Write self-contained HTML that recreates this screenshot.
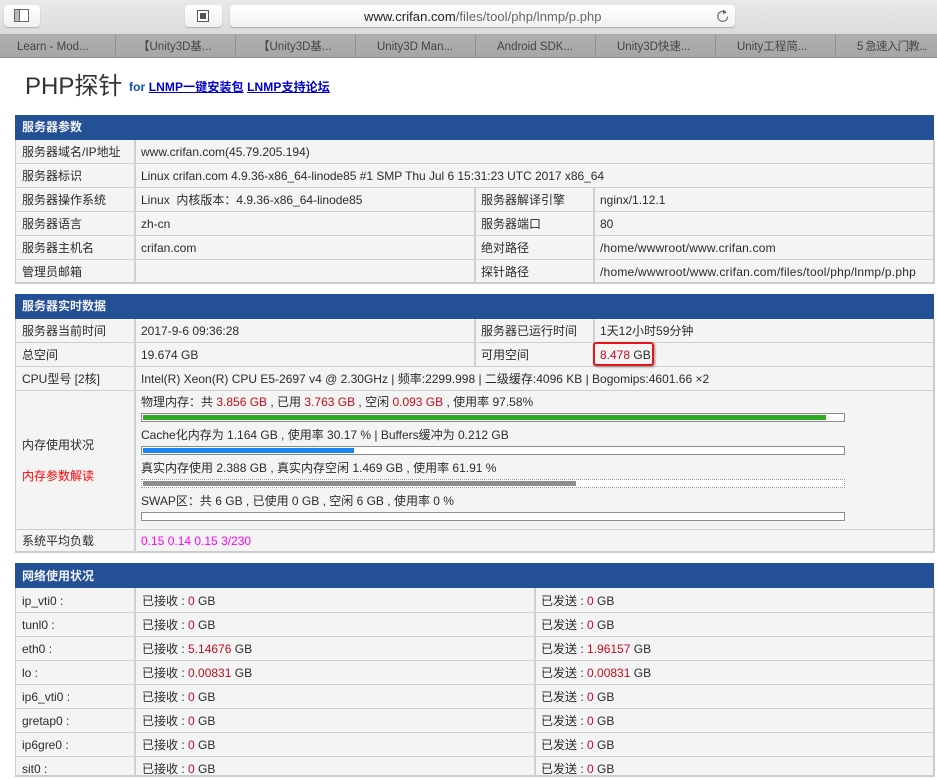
<!DOCTYPE html>
<html><head><meta charset="utf-8"><style>
html,body{margin:0;padding:0;background:#fff}
body{width:937px;height:775px;overflow:hidden;position:relative;font-family:"Liberation Sans","Noto Sans CJK SC",sans-serif;font-size:12px;color:#2b2b2b}
div{position:absolute}
.t{line-height:24px;white-space:nowrap;height:24px}
.n .t{margin-top:1px}
.r{color:#c00d1c}
.h{left:15px;width:919px;height:25px;background:#245196}
.ht{left:22px;line-height:25px;color:#f2f2f6;font-weight:bold;font-size:12px;white-space:nowrap}
.tb{left:15px;width:917px;background:#f4f4f4;border:1px solid #ccc;border-top:0;border-width:0 2px 2px 1px}
.hl{left:15px;width:919px;height:1px;background:#cdcdcd}
.vl{width:2px;background:#d0d0d0}
.tab{top:36px;height:22px;line-height:22px;text-align:center;font-size:11.5px;color:#444;white-space:nowrap}
.tl{top:35px;width:1px;height:22px;background:#8f8f8f}
.btn{background:linear-gradient(#fff,#f1f1f1);border-radius:4px;box-shadow:0 1px 1px #aaa;top:5px;height:22px}
.bar{left:141px;width:702px;height:7px;background:#fff;border:1px solid #8c8c8c}
.fill{left:1px;top:1px;height:5px}
</style></head><body>
<div style="left:0;top:0;width:937px;height:34px;background:linear-gradient(#e9e8ea,#dcdbdd);border-bottom:1px solid #a8a8a8"></div>
<div style="left:0;top:35px;width:937px;height:22px;background:linear-gradient(#b0afb0,#a7a6a7);border-bottom:1px solid #8f8f8f"></div>
<div class="btn" style="left:4px;width:36px"></div>
<svg style="position:absolute;left:14px;top:9px" width="16" height="14"><rect x=".5" y=".5" width="14" height="12" fill="#fff" stroke="#666"/><rect x="1" y="1" width="4.5" height="11" fill="#bbb"/><path d="M5.5 1v11" stroke="#666"/></svg>
<div class="btn" style="left:185px;width:37px"></div>
<svg style="position:absolute;left:197px;top:10px" width="14" height="14"><rect x=".5" y=".5" width="11" height="11" fill="#fff" stroke="#555"/><rect x="3" y="3" width="6" height="6" fill="#555"/></svg>
<div class="btn" style="left:230px;width:505px"></div>
<div class="t" style="left:364px;top:5px;font-size:13px;color:#222;letter-spacing:.05px">www.crifan.com<span style="color:#666">/files/tool/php/lnmp/p.php</span></div>
<svg style="position:absolute;left:715px;top:8px" width="15" height="16"><path d="M10.5 4.2A5 5 0 1 0 12.7 8.5" fill="none" stroke="#666" stroke-width="1.1"/><path d="M8 1.5l3.8 2.7L8 6.2z" fill="#666"/></svg>
<div class="tl" style="left:115px"></div><div class="tl" style="left:235px"></div><div class="tl" style="left:355px"></div><div class="tl" style="left:475px"></div><div class="tl" style="left:595px"></div><div class="tl" style="left:715px"></div><div class="tl" style="left:835px"></div>
<div class="tab" style="left:17px">Learn - Mod...</div>
<div class="tab" style="left:138px">【Unity3D基...</div>
<div class="tab" style="left:258px">【Unity3D基...</div>
<div class="tab" style="left:377px">Unity3D Man...</div>
<div class="tab" style="left:497px">Android SDK...</div>
<div class="tab" style="left:617px">Unity3D快速...</div>
<div class="tab" style="left:737px">Unity工程简...</div>
<div class="tab" style="left:857px;letter-spacing:-.7px">5 急速入门教...</div>

<div style="left:25px;top:68px;font-size:24px;line-height:38px;color:#333;white-space:nowrap">PHP探针</div>
<div style="left:129px;top:77px;font-size:12px;line-height:20px;font-weight:bold;color:#0b4fc0;white-space:nowrap;letter-spacing:.1px">for <span style="color:#00c;text-decoration:underline">LNMP一键安装包</span> <span style="color:#00c;text-decoration:underline">LNMP支持论坛</span></div>

<!-- table 1 -->
<div class="tb" style="top:140px;height:142px"></div>
<div class="h" style="top:115px"></div><div class="ht" style="top:115px">服务器参数</div>
<div class="hl" style="top:163px"></div><div class="hl" style="top:187px"></div><div class="hl" style="top:211px"></div><div class="hl" style="top:235px"></div><div class="hl" style="top:259px"></div>
<div class="vl" style="left:134px;top:140px;height:143px"></div>
<div class="vl" style="left:474px;top:188px;height:95px"></div>
<div class="vl" style="left:593px;top:188px;height:95px"></div>
<div class="t" style="left:22px;top:140px">服务器域名/IP地址</div><div class="t" style="left:141px;top:140px">www.crifan.com(45.79.205.194)</div>
<div class="t" style="left:22px;top:164px">服务器标识</div><div class="t" style="left:141px;top:164px;letter-spacing:-.035px">Linux crifan.com 4.9.36-x86_64-linode85 #1 SMP Thu Jul 6 15:31:23 UTC 2017 x86_64</div>
<div class="t" style="left:22px;top:188px">服务器操作系统</div><div class="t" style="left:141px;top:188px">Linux &nbsp;内核版本：4.9.36-x86_64-linode85</div>
<div class="t" style="left:481px;top:188px">服务器解译引擎</div><div class="t" style="left:600px;top:188px">nginx/1.12.1</div>
<div class="t" style="left:22px;top:212px">服务器语言</div><div class="t" style="left:141px;top:212px">zh-cn</div>
<div class="t" style="left:481px;top:212px">服务器端口</div><div class="t" style="left:600px;top:212px">80</div>
<div class="t" style="left:22px;top:236px">服务器主机名</div><div class="t" style="left:141px;top:236px">crifan.com</div>
<div class="t" style="left:481px;top:236px">绝对路径</div><div class="t" style="left:600px;top:236px;letter-spacing:.18px">/home/wwwroot/www.crifan.com</div>
<div class="t" style="left:22px;top:260px">管理员邮箱</div>
<div class="t" style="left:481px;top:260px">探针路径</div><div class="t" style="left:600px;top:260px;letter-spacing:.22px">/home/wwwroot/www.crifan.com/files/tool/php/lnmp/p.php</div>

<!-- table 2 -->
<div class="tb" style="top:319px;height:232px"></div>
<div class="h" style="top:294px"></div><div class="ht" style="top:294px">服务器实时数据</div>
<div class="hl" style="top:342px"></div><div class="hl" style="top:366px"></div><div class="hl" style="top:390px"></div><div class="hl" style="top:529px"></div>
<div class="vl" style="left:134px;top:319px;height:233px"></div>
<div class="vl" style="left:474px;top:319px;height:48px"></div>
<div class="vl" style="left:593px;top:319px;height:48px"></div>
<div class="t" style="left:22px;top:319px">服务器当前时间</div><div class="t" style="left:141px;top:319px">2017-9-6 09:36:28</div>
<div class="t" style="left:481px;top:319px">服务器已运行时间</div><div class="t" style="left:600px;top:319px">1天12小时59分钟</div>
<div class="t" style="left:22px;top:343px">总空间</div><div class="t" style="left:141px;top:343px">19.674 GB</div>
<div class="t" style="left:481px;top:343px">可用空间</div><div class="t" style="left:600px;top:343px"><span class="r">8.478</span> GB</div>
<div style="left:593px;top:342px;width:57px;height:20px;border:2px solid #e8141c;border-radius:3px;box-shadow:1px 1px 2px #888"></div>
<div class="t" style="left:22px;top:367px">CPU型号 [2核]</div><div class="t" style="left:141px;top:367px">Intel(R) Xeon(R) CPU E5-2697 v4 @ 2.30GHz | 频率:2299.998 | 二级缓存:4096 KB | Bogomips:4601.66 ×2</div>
<div class="t" style="left:22px;top:433px">内存使用状况</div>
<div class="t" style="left:22px;top:464px;color:#f00">内存参数解读</div>
<div class="t" style="left:141px;top:390px">物理内存：共 <span class="r">3.856 GB</span> , 已用 <span class="r">3.763 GB</span> , 空闲 <span class="r">0.093 GB</span> , 使用率 97.58%</div>
<div class="bar" style="top:413px"><div class="fill" style="width:683px;background:#2fab24"></div></div>
<div class="t" style="left:141px;top:423px">Cache化内存为 1.164 GB , 使用率 30.17 % | Buffers缓冲为 0.212 GB</div>
<div class="bar" style="top:446px"><div class="fill" style="width:211px;background:#1a86f0"></div></div>
<div class="t" style="left:141px;top:456px">真实内存使用 2.388 GB , 真实内存空闲 1.469 GB , 使用率 61.91 %</div>
<div class="bar" style="top:479px;border:1px dotted #999"><div class="fill" style="width:433px;background:#8c8c8c"></div></div>
<div class="t" style="left:141px;top:489px">SWAP区：共 6 GB , 已使用 0 GB , 空闲 6 GB , 使用率 0 %</div>
<div class="bar" style="top:512px"></div>
<div class="t" style="left:22px;top:529px">系统平均负载</div><div class="t" style="left:141px;top:529px;color:#f0f">0.15 0.14 0.15 3/230</div>

<!-- table 3 -->
<div class="tb" style="top:588px;height:187px"></div>
<div class="h" style="top:563px"></div><div class="ht" style="top:564px">网络使用状况</div>
<div class="hl" style="top:612px"></div><div class="hl" style="top:636px"></div><div class="hl" style="top:660px"></div><div class="hl" style="top:684px"></div><div class="hl" style="top:708px"></div><div class="hl" style="top:732px"></div><div class="hl" style="top:756px"></div>
<div class="vl" style="left:134px;top:588px;height:187px"></div>
<div class="vl" style="left:534px;top:588px;height:187px"></div>
<div class="n" style="left:0;top:0">
<div class="t" style="left:22px;top:588px">ip_vti0 :</div><div class="t" style="left:142px;top:588px">已接收 : <span class="r">0</span> GB</div><div class="t" style="left:541px;top:588px">已发送 : <span class="r">0</span> GB</div>
<div class="t" style="left:22px;top:612px">tunl0 :</div><div class="t" style="left:142px;top:612px">已接收 : <span class="r">0</span> GB</div><div class="t" style="left:541px;top:612px">已发送 : <span class="r">0</span> GB</div>
<div class="t" style="left:22px;top:636px">eth0 :</div><div class="t" style="left:142px;top:636px">已接收 : <span class="r">5.14676</span> GB</div><div class="t" style="left:541px;top:636px">已发送 : <span class="r">1.96157</span> GB</div>
<div class="t" style="left:22px;top:660px">lo :</div><div class="t" style="left:142px;top:660px">已接收 : <span class="r">0.00831</span> GB</div><div class="t" style="left:541px;top:660px">已发送 : <span class="r">0.00831</span> GB</div>
<div class="t" style="left:22px;top:684px">ip6_vti0 :</div><div class="t" style="left:142px;top:684px">已接收 : <span class="r">0</span> GB</div><div class="t" style="left:541px;top:684px">已发送 : <span class="r">0</span> GB</div>
<div class="t" style="left:22px;top:708px">gretap0 :</div><div class="t" style="left:142px;top:708px">已接收 : <span class="r">0</span> GB</div><div class="t" style="left:541px;top:708px">已发送 : <span class="r">0</span> GB</div>
<div class="t" style="left:22px;top:732px">ip6gre0 :</div><div class="t" style="left:142px;top:732px">已接收 : <span class="r">0</span> GB</div><div class="t" style="left:541px;top:732px">已发送 : <span class="r">0</span> GB</div>
<div class="t" style="left:22px;top:756px">sit0 :</div><div class="t" style="left:142px;top:756px">已接收 : <span class="r">0</span> GB</div><div class="t" style="left:541px;top:756px">已发送 : <span class="r">0</span> GB</div>
</div>
</body></html>
